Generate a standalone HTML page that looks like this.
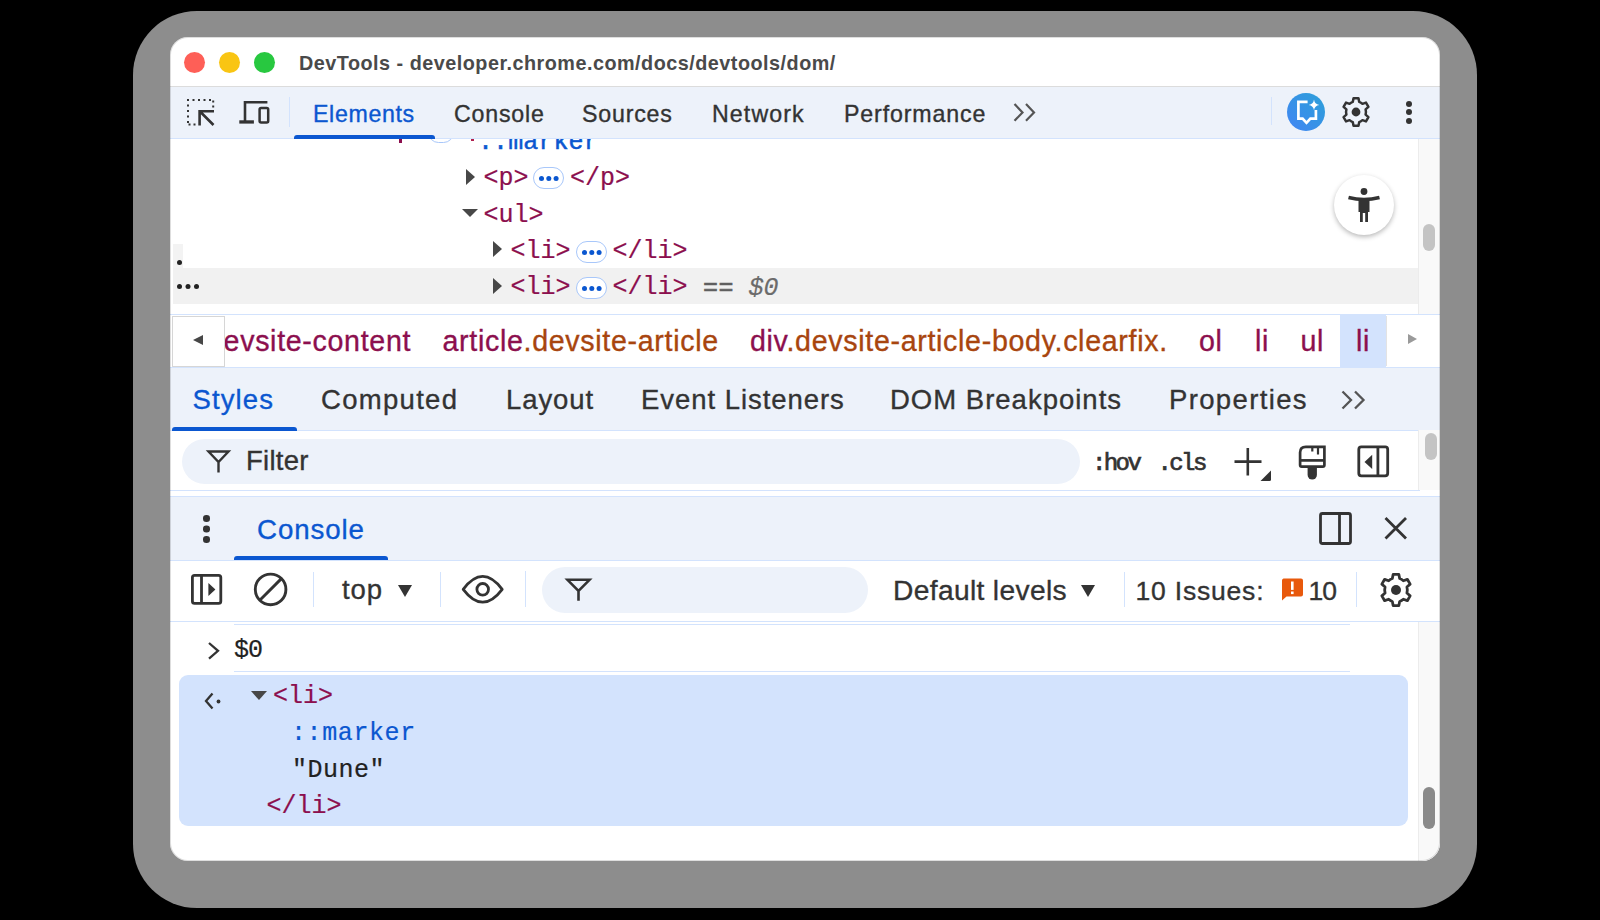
<!DOCTYPE html>
<html><head><meta charset="utf-8">
<style>
html,body{margin:0;padding:0;}
body{width:1600px;height:920px;background:#000;position:relative;overflow:hidden;font-family:"Liberation Sans",sans-serif;}
.abs{position:absolute;}
#shadow{position:absolute;left:132.5px;top:10.5px;width:1344px;height:897.5px;background:#8d8d8d;border-radius:64px;}
#win{position:absolute;left:170px;top:37px;width:1270px;height:824px;background:#fff;border-radius:18px;overflow:hidden;}
#in{position:absolute;left:-170px;top:-37px;width:1600px;height:920px;}
.t{position:absolute;white-space:nowrap;line-height:1;-webkit-text-stroke:0.35px currentColor;}
.bar{position:absolute;left:170px;width:1270px;background:#edf2fa;}
.hl{position:absolute;height:1px;background:#d3e3fd;}
.vl{position:absolute;width:1px;background:#d3e3fd;}
.mono{font-family:"Liberation Mono",monospace;-webkit-text-stroke:0.2px currentColor;}
.tag{color:#8c0f4e;}
</style></head><body>
<div id="shadow"></div>
<div id="win"><div id="in">

<!-- title bar -->
<div class="abs" style="left:184px;top:52px;width:21px;height:21px;border-radius:50%;background:#fe5f57;"></div>
<div class="abs" style="left:219px;top:52px;width:21px;height:21px;border-radius:50%;background:#f9c513;"></div>
<div class="abs" style="left:254px;top:52px;width:21px;height:21px;border-radius:50%;background:#28c840;"></div>
<div class="t" id="title" style="left:299px;top:53.8px;-webkit-text-stroke:0;font-size:19.8px;font-weight:bold;color:#4a4a4a;letter-spacing:0.5px;">DevTools - developer.chrome.com/docs/devtools/dom/</div>
<div class="abs" style="left:170px;top:86px;width:1270px;height:1px;background:#dcdcdc;"></div>

<!-- DOM tree -->
<div class="abs" style="left:399px;top:136px;width:2.5px;height:7px;background:#8c0f4e;"></div>
<div class="abs" style="left:428px;top:122px;width:24px;height:19px;border:1.3px solid #a8c7fa;border-radius:11px;"></div>
<div class="abs" style="left:471px;top:137px;width:2.5px;height:4px;background:#b0204f;"></div>
<div class="abs" style="left:173px;top:244px;width:10px;height:24px;background:#f3f3f3;"></div>
<div class="abs" style="left:173px;top:268px;width:1245px;height:35.5px;background:#f1f1f1;"></div>
<div class="abs" style="left:177px;top:259.5px;width:5px;height:5px;border-radius:50%;background:#222;"></div>
<div class="abs" style="left:177px;top:283.5px;width:5px;height:5px;border-radius:50%;background:#222;box-shadow:8.5px 0 0 #222,17px 0 0 #222;"></div>
<div class="t mono" style="left:478px;top:130.35px;font-size:25px;color:#0b57d0;letter-spacing:0.1px;-webkit-text-stroke:0.5px currentColor;">::marker</div>
<div class="abs" style="left:466px;top:168.5px;width:0;height:0;border-top:8.0px solid transparent;border-bottom:8.0px solid transparent;border-left:9.3px solid #474747;"></div>
<div class="t mono" style="left:483.5px;top:166.35px;font-size:25px;color:#8c0f4e;">&lt;p&gt;</div>
<div class="abs" style="left:532.5px;top:167.0px;width:29px;height:20px;border:1.5px solid #a8c7fa;border-radius:12px;background:#fff;"></div>
<div class="abs" style="left:538.7px;top:176.3px;width:5px;height:5px;border-radius:50%;background:#0b57d0;box-shadow:7.3px 0 0 #0b57d0,14.6px 0 0 #0b57d0;"></div>
<div class="t mono" style="left:570px;top:166.35px;font-size:25px;color:#8c0f4e;">&lt;/p&gt;</div>
<div class="abs" style="left:461.8px;top:208.8px;width:0;height:0;border-left:8.8px solid transparent;border-right:8.8px solid transparent;border-top:8.3px solid #474747;"></div>
<div class="t mono" style="left:483.5px;top:202.65px;font-size:25px;color:#8c0f4e;">&lt;ul&gt;</div>
<div class="abs" style="left:493.2px;top:241.3px;width:0;height:0;border-top:8.5px solid transparent;border-bottom:8.5px solid transparent;border-left:9.9px solid #474747;"></div>
<div class="t mono" style="left:510.5px;top:238.65px;font-size:25px;color:#8c0f4e;">&lt;li&gt;</div>
<div class="abs" style="left:575.5px;top:240.5px;width:29px;height:20px;border:1.5px solid #a8c7fa;border-radius:12px;background:#fff;"></div>
<div class="abs" style="left:581.7px;top:249.8px;width:5px;height:5px;border-radius:50%;background:#0b57d0;box-shadow:7.3px 0 0 #0b57d0,14.6px 0 0 #0b57d0;"></div>
<div class="t mono" style="left:612.5px;top:238.65px;font-size:25px;color:#8c0f4e;">&lt;/li&gt;</div>
<div class="abs" style="left:493.2px;top:277.8px;width:0;height:0;border-top:8.5px solid transparent;border-bottom:8.5px solid transparent;border-left:9.9px solid #474747;"></div>
<div class="t mono" style="left:510.5px;top:275.05px;font-size:25px;color:#8c0f4e;">&lt;li&gt;</div>
<div class="abs" style="left:575.5px;top:277.0px;width:29px;height:20px;border:1.5px solid #a8c7fa;border-radius:12px;background:#fff;"></div>
<div class="abs" style="left:581.7px;top:286.3px;width:5px;height:5px;border-radius:50%;background:#0b57d0;box-shadow:7.3px 0 0 #0b57d0,14.6px 0 0 #0b57d0;"></div>
<div class="t mono" style="left:612.5px;top:275.05px;font-size:25px;color:#8c0f4e;">&lt;/li&gt;</div>
<div class="t mono" style="left:703px;top:276px;font-size:25px;color:#5f5f5f;letter-spacing:0.5px;-webkit-text-stroke:0.6px currentColor;">==</div>
<div class="t mono" style="left:748.5px;top:276px;font-size:25px;color:#6b6b6b;font-style:italic;">$0</div>
<div class="abs" style="left:1334px;top:175px;width:60px;height:60px;border-radius:50%;background:#fff;box-shadow:0 2px 5px rgba(0,0,0,0.28);"></div>
<svg class="abs" style="left:1344px;top:185px" width="40" height="40" viewBox="1344 185 40 40">
<circle cx="1364" cy="191.5" r="3.4" fill="#333"/>
<path d="M1348.5 197.5 Q1364 201.5 1379.5 197.5" stroke="#333" stroke-width="3.4" fill="none"/>
<path d="M1358.5 199.5 H1369.5 V212 H1368 V222 H1365.2 V213 H1362.8 V222 H1360 V212 H1358.5 Z" fill="#333"/>
</svg>
<div class="abs" style="left:1418px;top:138px;width:22px;height:176px;background:#f9f9f9;border-left:1px solid #ececec;"></div>
<div class="abs" style="left:1423px;top:224px;width:12px;height:27px;border-radius:6px;background:#c4c4c4;"></div>
<div class="hl" style="left:170px;top:313.5px;width:1270px;"></div>
<!-- breadcrumbs -->
<div class="abs" style="left:224px;top:315px;width:1162px;height:52px;overflow:hidden;">
<div class="abs" style="left:1116px;top:0px;width:46px;height:52px;background:#d3e3fd;"></div>
<div class="t" style="left:-17.0px;top:11.79px;font-size:28.6px;letter-spacing:0.68px;"><span style="color:#8c0f4e">devsite-content</span></div>
<div class="t" style="left:218.5px;top:11.79px;font-size:28.6px;letter-spacing:0.68px;"><span style="color:#8c0f4e">article</span><span style="color:#a8450e">.devsite-article</span></div>
<div class="t" style="left:526.0px;top:11.79px;font-size:28.6px;letter-spacing:0.68px;"><span style="color:#8c0f4e">div</span><span style="color:#a8450e">.devsite-article-body.clearfix.</span></div>
<div class="t" style="left:975.0px;top:11.79px;font-size:28.6px;letter-spacing:0.68px;"><span style="color:#8c0f4e">ol</span></div>
<div class="t" style="left:1031.0px;top:11.79px;font-size:28.6px;letter-spacing:0.68px;"><span style="color:#8c0f4e">li</span></div>
<div class="t" style="left:1076.5px;top:11.79px;font-size:28.6px;letter-spacing:0.68px;"><span style="color:#8c0f4e">ul</span></div>
<div class="t" style="left:1132.0px;top:11.79px;font-size:28.6px;letter-spacing:0.68px;"><span style="color:#8c0f4e">li</span></div>
</div>
<div class="abs" style="left:172px;top:316px;width:51px;height:49px;background:#fff;border:1px solid #d6d6d6;"></div>
<div class="abs" style="left:193px;top:334.5px;width:0;height:0;border-top:5.5px solid transparent;border-bottom:5.5px solid transparent;border-right:10px solid #474747;"></div>
<div class="abs" style="left:1386px;top:316px;width:54px;height:50px;background:#fff;border-left:1px solid #e3e3e3;"></div>
<div class="abs" style="left:1408px;top:334px;width:0;height:0;border-top:5.5px solid transparent;border-bottom:5.5px solid transparent;border-left:9px solid #9a9a9a;"></div>
<div class="hl" style="left:170px;top:366.5px;width:1270px;"></div>
<!-- sidebar tabs -->
<div class="bar" style="top:367.5px;height:62px;"></div>
<div class="hl" style="left:170px;top:429.5px;width:1270px;"></div>
<div class="t" style="left:192.5px;top:386.42px;font-size:27.5px;color:#0b57d0;letter-spacing:1.1px;">Styles</div>
<div class="abs" style="left:172px;top:426.5px;width:125px;height:4px;background:#0b57d0;border-radius:3px 3px 0 0;"></div>
<div class="t" style="left:321px;top:386.42px;font-size:27.5px;color:#333;letter-spacing:1.3px;">Computed</div>
<div class="t" style="left:506px;top:386.42px;font-size:27.5px;color:#333;letter-spacing:0.9px;">Layout</div>
<div class="t" style="left:641px;top:386.42px;font-size:27.5px;color:#333;letter-spacing:0.95px;">Event Listeners</div>
<div class="t" style="left:890px;top:386.42px;font-size:27.5px;color:#333;letter-spacing:1.0px;">DOM Breakpoints</div>
<div class="t" style="left:1169px;top:386.42px;font-size:27.5px;color:#333;letter-spacing:1.36px;">Properties</div>
<svg class="abs" style="left:1335px;top:385px" width="40" height="30" viewBox="1335 385 40 30">
<path d="M1342.5 391.5 L1351 400 L1342.5 408.5 M1355 391.5 L1363.5 400 L1355 408.5" stroke="#555" stroke-width="2.3" fill="none"/>
</svg>
<!-- filter row -->
<div class="abs" style="left:182px;top:439px;width:898px;height:45px;border-radius:23px;background:#edf2fa;"></div>
<svg class="abs" style="left:200px;top:445px" width="35" height="32" viewBox="200 445 35 32">
<path d="M208.5 451.5 H228.5 L218.5 462 Z M218.5 462 V472.4" stroke="#333" stroke-width="2.4" fill="none" stroke-linejoin="miter"/>
</svg>
<div class="t" style="left:246px;top:447.32px;font-size:27.5px;color:#333;letter-spacing:0.28px;">Filter</div>
<div class="t mono" style="left:1092px;top:451.5px;font-size:24px;color:#333;letter-spacing:-2.6px;-webkit-text-stroke:0.7px currentColor;">:hov</div>
<div class="t mono" style="left:1157.5px;top:451.5px;font-size:24px;color:#333;letter-spacing:-2.6px;-webkit-text-stroke:0.7px currentColor;">.cls</div>
<svg class="abs" style="left:1230px;top:440px" width="45" height="45" viewBox="1230 440 45 45">
<path d="M1247.8 448 V475.5 M1234.5 461.6 H1261.5" stroke="#333" stroke-width="2.6" fill="none"/>
<path d="M1271 470.5 L1271 479.5 Q1271 481 1269.5 481 L1260.5 481 Z" fill="#333"/>
</svg>
<svg class="abs" style="left:1290px;top:440px" width="44" height="44" viewBox="1290 440 44 44">
<path d="M1324.4 446.8 V465 Q1324.4 466.6 1322.8 466.6 H1301.7 Q1300.1 466.6 1300.1 465 V452.5 Q1300.1 446.8 1305.8 446.8 Z" stroke="#333" stroke-width="2.7" fill="none"/>
<path d="M1300.1 460.4 H1324.4" stroke="#333" stroke-width="2.7"/>
<path d="M1312.3 446.8 V451.5 M1318 446.8 V454.5" stroke="#333" stroke-width="2.2"/>
<path d="M1307.6 466 H1316.9 V474.9 A4.65 4.65 0 0 1 1307.6 474.9 Z" fill="#333"/>
</svg>
<svg class="abs" style="left:1350px;top:440px" width="44" height="44" viewBox="1350 440 44 44">
<rect x="1358.8" y="446.9" width="28.9" height="28.9" rx="2.5" stroke="#333" stroke-width="2.8" fill="none"/>
<path d="M1377.9 446.9 V475.8" stroke="#333" stroke-width="2.8"/>
<path d="M1372.2 454.8 V469 L1364.5 461.9 Z" fill="#333"/>
</svg>
<div class="abs" style="left:1418px;top:430px;width:22px;height:60px;background:#f9f9f9;border-left:1px solid #ececec;"></div>
<div class="abs" style="left:1425px;top:433px;width:12px;height:27px;border-radius:6px;background:#c4c4c4;"></div>
<div class="hl" style="left:170px;top:489.5px;width:1250px;"></div>
<!-- drawer -->
<div class="bar" style="top:496.5px;height:63px;"></div>
<div class="hl" style="left:170px;top:496px;width:1270px;"></div>
<div class="hl" style="left:170px;top:559.5px;width:1270px;"></div>
<div class="abs" style="left:203px;top:515px;width:6.6px;height:6.6px;border-radius:50%;background:#333;box-shadow:0 10.5px 0 #333,0 21px 0 #333;"></div>
<div class="t" style="left:257px;top:516.05px;font-size:27.7px;color:#0b57d0;letter-spacing:0.9px;">Console</div>
<div class="abs" style="left:234px;top:555.5px;width:154px;height:4.5px;background:#0b57d0;border-radius:3px 3px 0 0;"></div>
<svg class="abs" style="left:1310px;top:505px" width="50" height="50" viewBox="1310 505 50 50">
<rect x="1320.5" y="513.5" width="30" height="30" rx="2" stroke="#333" stroke-width="2.8" fill="none"/>
<path d="M1339.5 513.5 V543.5" stroke="#333" stroke-width="2.8"/>
</svg>
<svg class="abs" style="left:1375px;top:505px" width="40" height="45" viewBox="1375 505 40 45">
<path d="M1385.5 518 L1406 538.5 M1406 518 L1385.5 538.5" stroke="#333" stroke-width="2.8" fill="none"/>
</svg>
<!-- console toolbar -->
<svg class="abs" style="left:185px;top:568px" width="45" height="45" viewBox="185 568 45 45">
<rect x="192.4" y="575.4" width="28.4" height="28" rx="2.2" stroke="#333" stroke-width="2.8" fill="none"/>
<path d="M201.5 575.4 V603.4" stroke="#333" stroke-width="2.8"/>
<path d="M208.4 583 L215.4 589.5 L208.4 596 Z" fill="#333"/>
</svg>
<svg class="abs" style="left:248px;top:566px" width="45" height="45" viewBox="248 566 45 45">
<circle cx="270.6" cy="589.4" r="15.3" stroke="#333" stroke-width="2.9" fill="none"/>
<path d="M259.8 600.2 L281.4 578.6" stroke="#333" stroke-width="2.9"/>
</svg>
<div class="vl" style="left:313px;top:572px;height:35px;"></div>
<div class="t" style="left:342px;top:576.12px;font-size:27.5px;color:#333;letter-spacing:0.9px;">top</div>
<div class="abs" style="left:397.7px;top:585px;width:0;height:0;border-left:7.75px solid transparent;border-right:7.75px solid transparent;border-top:12.4px solid #333;"></div>
<div class="vl" style="left:440px;top:572px;height:35px;"></div>
<svg class="abs" style="left:455px;top:570px" width="56" height="40" viewBox="455 570 56 40">
<path d="M463.2 589.3 Q482.7 563.5 502.2 589.3 Q482.7 615 463.2 589.3 Z" stroke="#333" stroke-width="2.8" fill="none" stroke-linejoin="round"/>
<circle cx="482.7" cy="589.3" r="5.8" stroke="#333" stroke-width="2.8" fill="none"/>
</svg>
<div class="vl" style="left:525px;top:571px;height:36px;"></div>
<div class="abs" style="left:542px;top:567px;width:326px;height:46px;border-radius:23px;background:#edf2fa;"></div>
<svg class="abs" style="left:560px;top:572px" width="35" height="35" viewBox="560 572 35 35">
<path d="M567.5 579.8 H589.5 L578.5 591 Z M578.5 591 V600.7" stroke="#333" stroke-width="2.6" fill="none"/>
</svg>
<div class="t" style="left:893px;top:576.33px;font-size:28.2px;color:#333;letter-spacing:0.34px;">Default levels</div>
<div class="abs" style="left:1081px;top:584.5px;width:0;height:0;border-left:7.85px solid transparent;border-right:7.85px solid transparent;border-top:12.3px solid #333;"></div>
<div class="vl" style="left:1124px;top:572px;height:35px;"></div>
<div class="t" style="left:1135.5px;top:577.57px;font-size:26.5px;color:#333;letter-spacing:0.8px;">10 Issues:</div>
<svg class="abs" style="left:1278px;top:574px" width="30" height="30" viewBox="1278 574 30 30">
<path d="M1283.5 578.6 H1301 A2 2 0 0 1 1303 580.6 V594.6 A2 2 0 0 1 1301 596.6 H1286.5 L1282 600.5 V580.6 A2 2 0 0 1 1283.5 578.6 Z" fill="#e8590c"/>
<rect x="1291" y="581.5" width="2.6" height="8.4" fill="#fff"/>
<rect x="1291" y="591.5" width="2.6" height="2.6" fill="#fff"/>
</svg>
<div class="t" style="left:1308.5px;top:577.57px;font-size:26.5px;color:#333;letter-spacing:-1px;">10</div>
<div class="vl" style="left:1356px;top:572px;height:35px;"></div>
<svg class="abs" style="left:1375px;top:569px" width="42" height="42" viewBox="-21 -21 42 42">
<use href="#gearp" transform="scale(1.08)"/>
<circle cx="0" cy="0" r="5" fill="#333"/>
</svg>
<div class="hl" style="left:170px;top:621px;width:1270px;"></div>
<!-- console messages -->
<div class="hl" style="left:234px;top:623.5px;width:1116px;"></div>
<svg class="abs" style="left:200px;top:635px" width="30" height="30" viewBox="200 635 30 30">
<path d="M209 643 L218 650.8 L209 658.6" stroke="#333" stroke-width="2.3" fill="none"/>
</svg>
<div class="t mono" style="left:234px;top:637.85px;font-size:25px;color:#222;letter-spacing:-1px;">$0</div>
<div class="hl" style="left:234px;top:670.5px;width:1116px;"></div>
<div class="abs" style="left:179px;top:675px;width:1229px;height:151px;border-radius:9px;background:#d3e3fd;"></div>
<svg class="abs" style="left:198px;top:688px" width="30" height="28" viewBox="198 688 30 28">
<path d="M212.5 693.5 L206 701 L212.5 708.5" stroke="#333" stroke-width="2.3" fill="none"/>
<circle cx="218.5" cy="701.5" r="1.9" fill="#333"/>
</svg>
<div class="abs" style="left:251px;top:691.4px;width:0;height:0;border-left:8.9px solid transparent;border-right:8.9px solid transparent;border-top:9px solid #474747;"></div>
<div class="t mono" style="left:273px;top:684.45px;font-size:25px;color:#8c0f4e;">&lt;li&gt;</div>
<div class="t mono" style="left:291px;top:721.05px;font-size:25px;color:#0b57d0;letter-spacing:0.6px;">::marker</div>
<div class="t mono" style="left:292px;top:757.65px;font-size:25px;color:#222;letter-spacing:0.5px;">"Dune"</div>
<div class="t mono" style="left:266.5px;top:794.25px;font-size:25px;color:#8c0f4e;">&lt;/li&gt;</div>
<div class="abs" style="left:1418px;top:622px;width:22px;height:239px;background:#f9f9f9;border-left:1px solid #ececec;"></div>
<div class="abs" style="left:1423px;top:787px;width:12px;height:42px;border-radius:6px;background:#8a8a8a;"></div>
<!-- main toolbar -->
<div class="bar" style="top:87px;height:51px;"></div>
<div class="hl" style="left:170px;top:138px;width:1270px;"></div>

<!-- inspect icon -->
<svg class="abs" style="left:180px;top:90px" width="50" height="45" viewBox="180 90 50 45">
<g fill="#333">
<rect x="187" y="99" width="2" height="2"/><rect x="192.5" y="99" width="2" height="2"/><rect x="198" y="99" width="2" height="2"/><rect x="203.5" y="99" width="2" height="2"/><rect x="209" y="99" width="2" height="2"/><rect x="212.2" y="100.5" width="2" height="2"/>
<rect x="212.2" y="105.5" width="2" height="2"/>
<rect x="187" y="104.5" width="2" height="2"/><rect x="187" y="110" width="2" height="2"/><rect x="187" y="115.5" width="2" height="2"/><rect x="187" y="121" width="2" height="2"/><rect x="188.5" y="123.5" width="2" height="2"/><rect x="193.5" y="123.5" width="2" height="2"/>
</g>
<path d="M199.6 125.5 V111.2 H214 M200 111.5 L213.5 125" stroke="#333" stroke-width="2.6" fill="none"/>
</svg>
<!-- device icon -->
<svg class="abs" style="left:235px;top:95px" width="40" height="35" viewBox="235 95 40 35">
<path d="M267.4 102.3 H245 V122" stroke="#333" stroke-width="2.6" fill="none"/>
<rect x="239.3" y="120.3" width="14.6" height="3.3" fill="#333"/>
<rect x="259.6" y="108" width="8.6" height="14.4" rx="1.5" stroke="#333" stroke-width="2.5" fill="none"/>
</svg>
<div class="vl" style="left:289px;top:97px;height:30px;"></div>
<div class="t" style="left:313px;top:103px;font-size:23.2px;color:#0b57d0;letter-spacing:0.65px;">Elements</div>
<div class="abs" style="left:294px;top:134.5px;width:141px;height:4px;background:#0b57d0;border-radius:3px 3px 0 0;"></div>
<div class="t" style="left:454px;top:103px;font-size:23.2px;color:#333;letter-spacing:0.79px;">Console</div>
<div class="t" style="left:582px;top:103px;font-size:23.2px;color:#333;letter-spacing:0.79px;">Sources</div>
<div class="t" style="left:712px;top:103px;font-size:23.2px;color:#333;letter-spacing:1.1px;">Network</div>
<div class="t" style="left:844px;top:103px;font-size:23.2px;color:#333;letter-spacing:0.87px;">Performance</div>
<svg class="abs" style="left:1005px;top:95px" width="40" height="35" viewBox="1005 95 40 35">
<path d="M1014.5 104 L1022.5 112.4 L1014.5 120.8 M1026 104 L1034 112.4 L1026 120.8" stroke="#555" stroke-width="2.2" fill="none"/>
</svg>
<div class="vl" style="left:1271px;top:97px;height:28px;"></div>
<!-- AI icon -->
<svg class="abs" style="left:1280px;top:86px" width="52" height="52" viewBox="1280 86 52 52">
<defs><linearGradient id="aig" x1="0" y1="1" x2="1" y2="0"><stop offset="0" stop-color="#4285f4"/><stop offset="1" stop-color="#2ba0d8"/></linearGradient></defs>
<circle cx="1306" cy="112" r="19" fill="url(#aig)"/>
<path d="M1307.6 101.8 H1298.4 V118.6 H1302.6 L1306.5 122.8 L1310.4 118.6 H1315.9 V110" stroke="#fff" stroke-width="2.7" fill="none" stroke-linejoin="miter"/>
<path d="M1314 99.6 Q1314.6 104.3 1319.3 104.9 Q1314.6 105.5 1314 110.2 Q1313.4 105.5 1308.7 104.9 Q1313.4 104.3 1314 99.6 Z" fill="#fff"/>
</svg>
<!-- gear -->
<svg class="abs" style="left:1336px;top:92px" width="40" height="40" viewBox="-20 -20 40 40">
<g transform="scale(0.95)"><path id="gearp" d="M-2.6 -14.5 L2.6 -14.5 L3.4 -10.6 A10.6 10.6 0 0 1 6.8 -8.6 L10.5 -9.9 L13.1 -5.4 L10.1 -2.8 A10.6 10.6 0 0 1 10.1 2.8 L13.1 5.4 L10.5 9.9 L6.8 8.6 A10.6 10.6 0 0 1 3.4 10.6 L2.6 14.5 L-2.6 14.5 L-3.4 10.6 A10.6 10.6 0 0 1 -6.8 8.6 L-10.5 9.9 L-13.1 5.4 L-10.1 2.8 A10.6 10.6 0 0 1 -10.1 -2.8 L-13.1 -5.4 L-10.5 -9.9 L-6.8 -8.6 A10.6 10.6 0 0 1 -3.4 -10.6 Z" fill="none" stroke="#333" stroke-width="2.6" stroke-linejoin="round"/></g>
<circle cx="0" cy="0" r="4.4" fill="#333"/>
</svg>
<div class="abs" style="left:1406.3px;top:100.5px;width:6px;height:6px;border-radius:50%;background:#333;"></div>
<div class="abs" style="left:1406.3px;top:109.2px;width:6px;height:6px;border-radius:50%;background:#333;"></div>
<div class="abs" style="left:1406.3px;top:117.9px;width:6px;height:6px;border-radius:50%;background:#333;"></div>

</div><div style="position:absolute;left:0;top:0;right:0;bottom:0;border-radius:18px;box-shadow:inset 0 0 0 1px rgba(0,0,0,0.13);"></div></div>
</body></html>
